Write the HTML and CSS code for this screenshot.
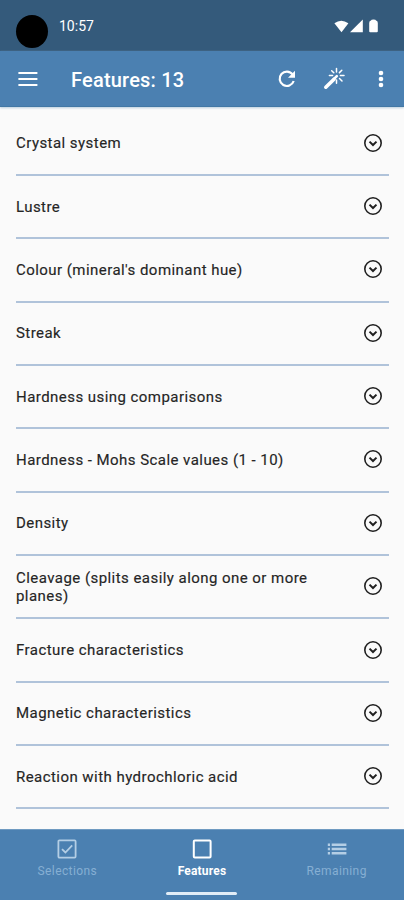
FILE: index.html
```html
<!DOCTYPE html>
<html lang="en">
<head>
<meta charset="utf-8">
<title>Features</title>
<link rel="stylesheet" href="styles.css">
</head>
<body>
<svg width="0" height="0" class="defs">
  <symbol id="chev" viewBox="0 0 20 20"><circle cx="10" cy="10" r="8.2" fill="none" stroke="currentColor" stroke-width="1.6"/><path d="M6.5 8.6 10 12l3.5-3.4" fill="none" stroke="currentColor" stroke-width="2"/></symbol>
</svg>
<div class="screen">
  <div class="status">
    <span class="camera"></span>
    <span class="clock">10:57</span>
    <svg class="signals" width="46" height="16" viewBox="0 0 46 16" fill="#fff">
      <path d="M.4 4.3Q7.2-.9 14.4 4.3L7.5 13.2Z"/>
      <path d="M28.8.6V13.2H16Z"/>
      <path d="M37 1.600Q37 .4 39.500 .4T42 1.600Q43.800 1.800 43.800 4V12.200q0 1-1 1h-6.600q-1 0-1-1V4Q35.200 1.800 37 1.600Z"/>
    </svg>
  </div>
  <header class="appbar">
    <svg class="menu" width="20" height="16" viewBox="0 0 20 16" stroke="#fff" stroke-width="2"><path d="M.4 2h19M.4 8h19M.4 14h19"/></svg>
    <h1>Features: 13</h1>
    <svg class="refresh" width="18" height="18" viewBox="0 0 18 18"><path d="M14.600 4.400A7.200 7.200 0 1 0 15.700 11" fill="none" stroke="#fff" stroke-width="2.200"/><path d="M17 .8V7.800H10Z" fill="#fff"/></svg>
    <svg class="wand" width="23" height="23" viewBox="0 0 23 23" fill="none" stroke="#fff" stroke-linecap="round"><path d="M2.800 20.200 11 12.200" stroke-width="3.600"/><path d="M10.800 12.200 13.800 9.200" stroke-width="2.600"/><path d="M13.500 1.500V5M13.500 13V16.200M6.400 8.500H9.600M17.400 8.500H21M8.700 3.700 10.800 5.800M16.400 5.600 18.800 3.200M16.500 11.500 19 14" stroke-width="1.500"/></svg>
    <svg class="more" width="6" height="18" viewBox="0 0 6 18" fill="#fff"><circle cx="3" cy="3" r="2.300"/><circle cx="3" cy="9" r="2.300"/><circle cx="3" cy="15" r="2.300"/></svg>
  </header>
  <main class="list">
    <div class="row"><span>Crystal system</span><svg><use href="#chev"/></svg></div>
    <div class="row"><span>Lustre</span><svg><use href="#chev"/></svg></div>
    <div class="row"><span>Colour (mineral's dominant hue)</span><svg><use href="#chev"/></svg></div>
    <div class="row"><span>Streak</span><svg><use href="#chev"/></svg></div>
    <div class="row"><span>Hardness using comparisons</span><svg><use href="#chev"/></svg></div>
    <div class="row"><span>Hardness - Mohs Scale values (1 - 10)</span><svg><use href="#chev"/></svg></div>
    <div class="row"><span>Density</span><svg><use href="#chev"/></svg></div>
    <div class="row"><span>Cleavage (splits easily along one or more planes)</span><svg><use href="#chev"/></svg></div>
    <div class="row"><span>Fracture characteristics</span><svg><use href="#chev"/></svg></div>
    <div class="row"><span>Magnetic characteristics</span><svg><use href="#chev"/></svg></div>
    <div class="row"><span>Reaction with hydrochloric acid</span><svg><use href="#chev"/></svg></div>
  </main>
  <nav class="tabs">
    <div class="tab">
      <svg width="20" height="20" viewBox="0 0 20 20" fill="none" stroke="currentColor" stroke-width="1.800"><rect x="1.400" y="1.400" width="17.200" height="17.200" rx="1"/><path d="M5 10.200 8.400 13.500 15.200 6.300"/></svg>
      <span>Selections</span>
    </div>
    <div class="tab active">
      <svg width="20" height="20" viewBox="0 0 20 20" fill="none" stroke="currentColor" stroke-width="2"><rect x="1.800" y="1.400" width="16.800" height="17.200" rx="1"/></svg>
      <span>Features</span>
      <i class="indicator"></i>
    </div>
    <div class="tab">
      <svg width="20" height="20" viewBox="0 0 20 20" fill="none" stroke="currentColor" stroke-width="2.600"><path d="M.8 5.700H3M.8 10H3M.8 14.300H3M4.700 5.700H19.400M4.700 10H19.400M4.700 14.300H19.400"/></svg>
      <span>Remaining</span>
    </div>
  </nav>
</div>
</body>
</html>
```
FILE: styles.css
```css
* { box-sizing: border-box; }
body { margin: 0; font-family: Roboto, "Liberation Sans", sans-serif; }
.defs { position: absolute; }
.screen {
  width: 404px;
  height: 900px;
  display: flex;
  flex-direction: column;
  background: #fafafa;
  overflow: hidden;
}
.status {
  height: 51px;
  flex: none;
  display: flex;
  align-items: flex-start;
  background: #345a7b;
  padding: 15px 24px 0 16px;
  color: #fff;
}
.camera { width: 32px; height: 33px; border-radius: 50%; background: #000; }
.clock { margin-left: 11px; margin-top: 3px; font-size: 14px; line-height: 17px; }
.signals { margin-left: auto; margin-top: 4px; }
.appbar {
  height: 56px;
  flex: none;
  display: flex;
  align-items: center;
  background: #4b80b1;
  border-bottom: 1px solid #4278a5;
  box-shadow: 0 1px 2px #b9cddd;
  padding: 0 20px 0 18px;
  color: #fff;
}
.appbar h1 {
  margin: 0 auto 0 33px;
  font-size: 20px;
  font-weight: 500;
  line-height: 24px;
  letter-spacing: .2px;
  padding-top: 2px;
}
.refresh { margin-right: 27px; }
.wand { margin-right: 32px; }
.list { flex: 1; padding: 5.6px 15px 0 16px; }
.row {
  height: 63.35px;
  display: flex;
  align-items: center;
  justify-content: space-between;
  border-bottom: 2px solid #b0c3da;
  padding-right: 6px;
  color: #252525;
}
.row span {
  max-width: 305px;
  font-size: 15px;
  line-height: 18px;
  letter-spacing: .45px;
  -webkit-text-stroke: .15px #252525;
}
.row svg { width: 20px; height: 20px; flex: none; color: #202020; position: relative; top: -.5px; }
.tabs {
  height: 71px;
  flex: none;
  display: grid;
  grid-template-columns: repeat(3, 1fr);
  background: #4b80b1;
  border-top: 1px solid #6f9ac1;
}
.tab {
  display: flex;
  flex-direction: column;
  align-items: center;
  padding-top: 9px;
  color: #b4cee5;
  font-size: 12px;
  line-height: 14px;
  letter-spacing: .4px;
}
.tab span { margin-top: 5px; color: #86afd3; }
.tab.active { color: #fff; letter-spacing: .2px; }
.tab.active span { color: #fff; font-weight: 700; }
.indicator { width: 71px; height: 3px; margin-top: 14px; border-radius: 2px; background: #e2edf7; }
```
